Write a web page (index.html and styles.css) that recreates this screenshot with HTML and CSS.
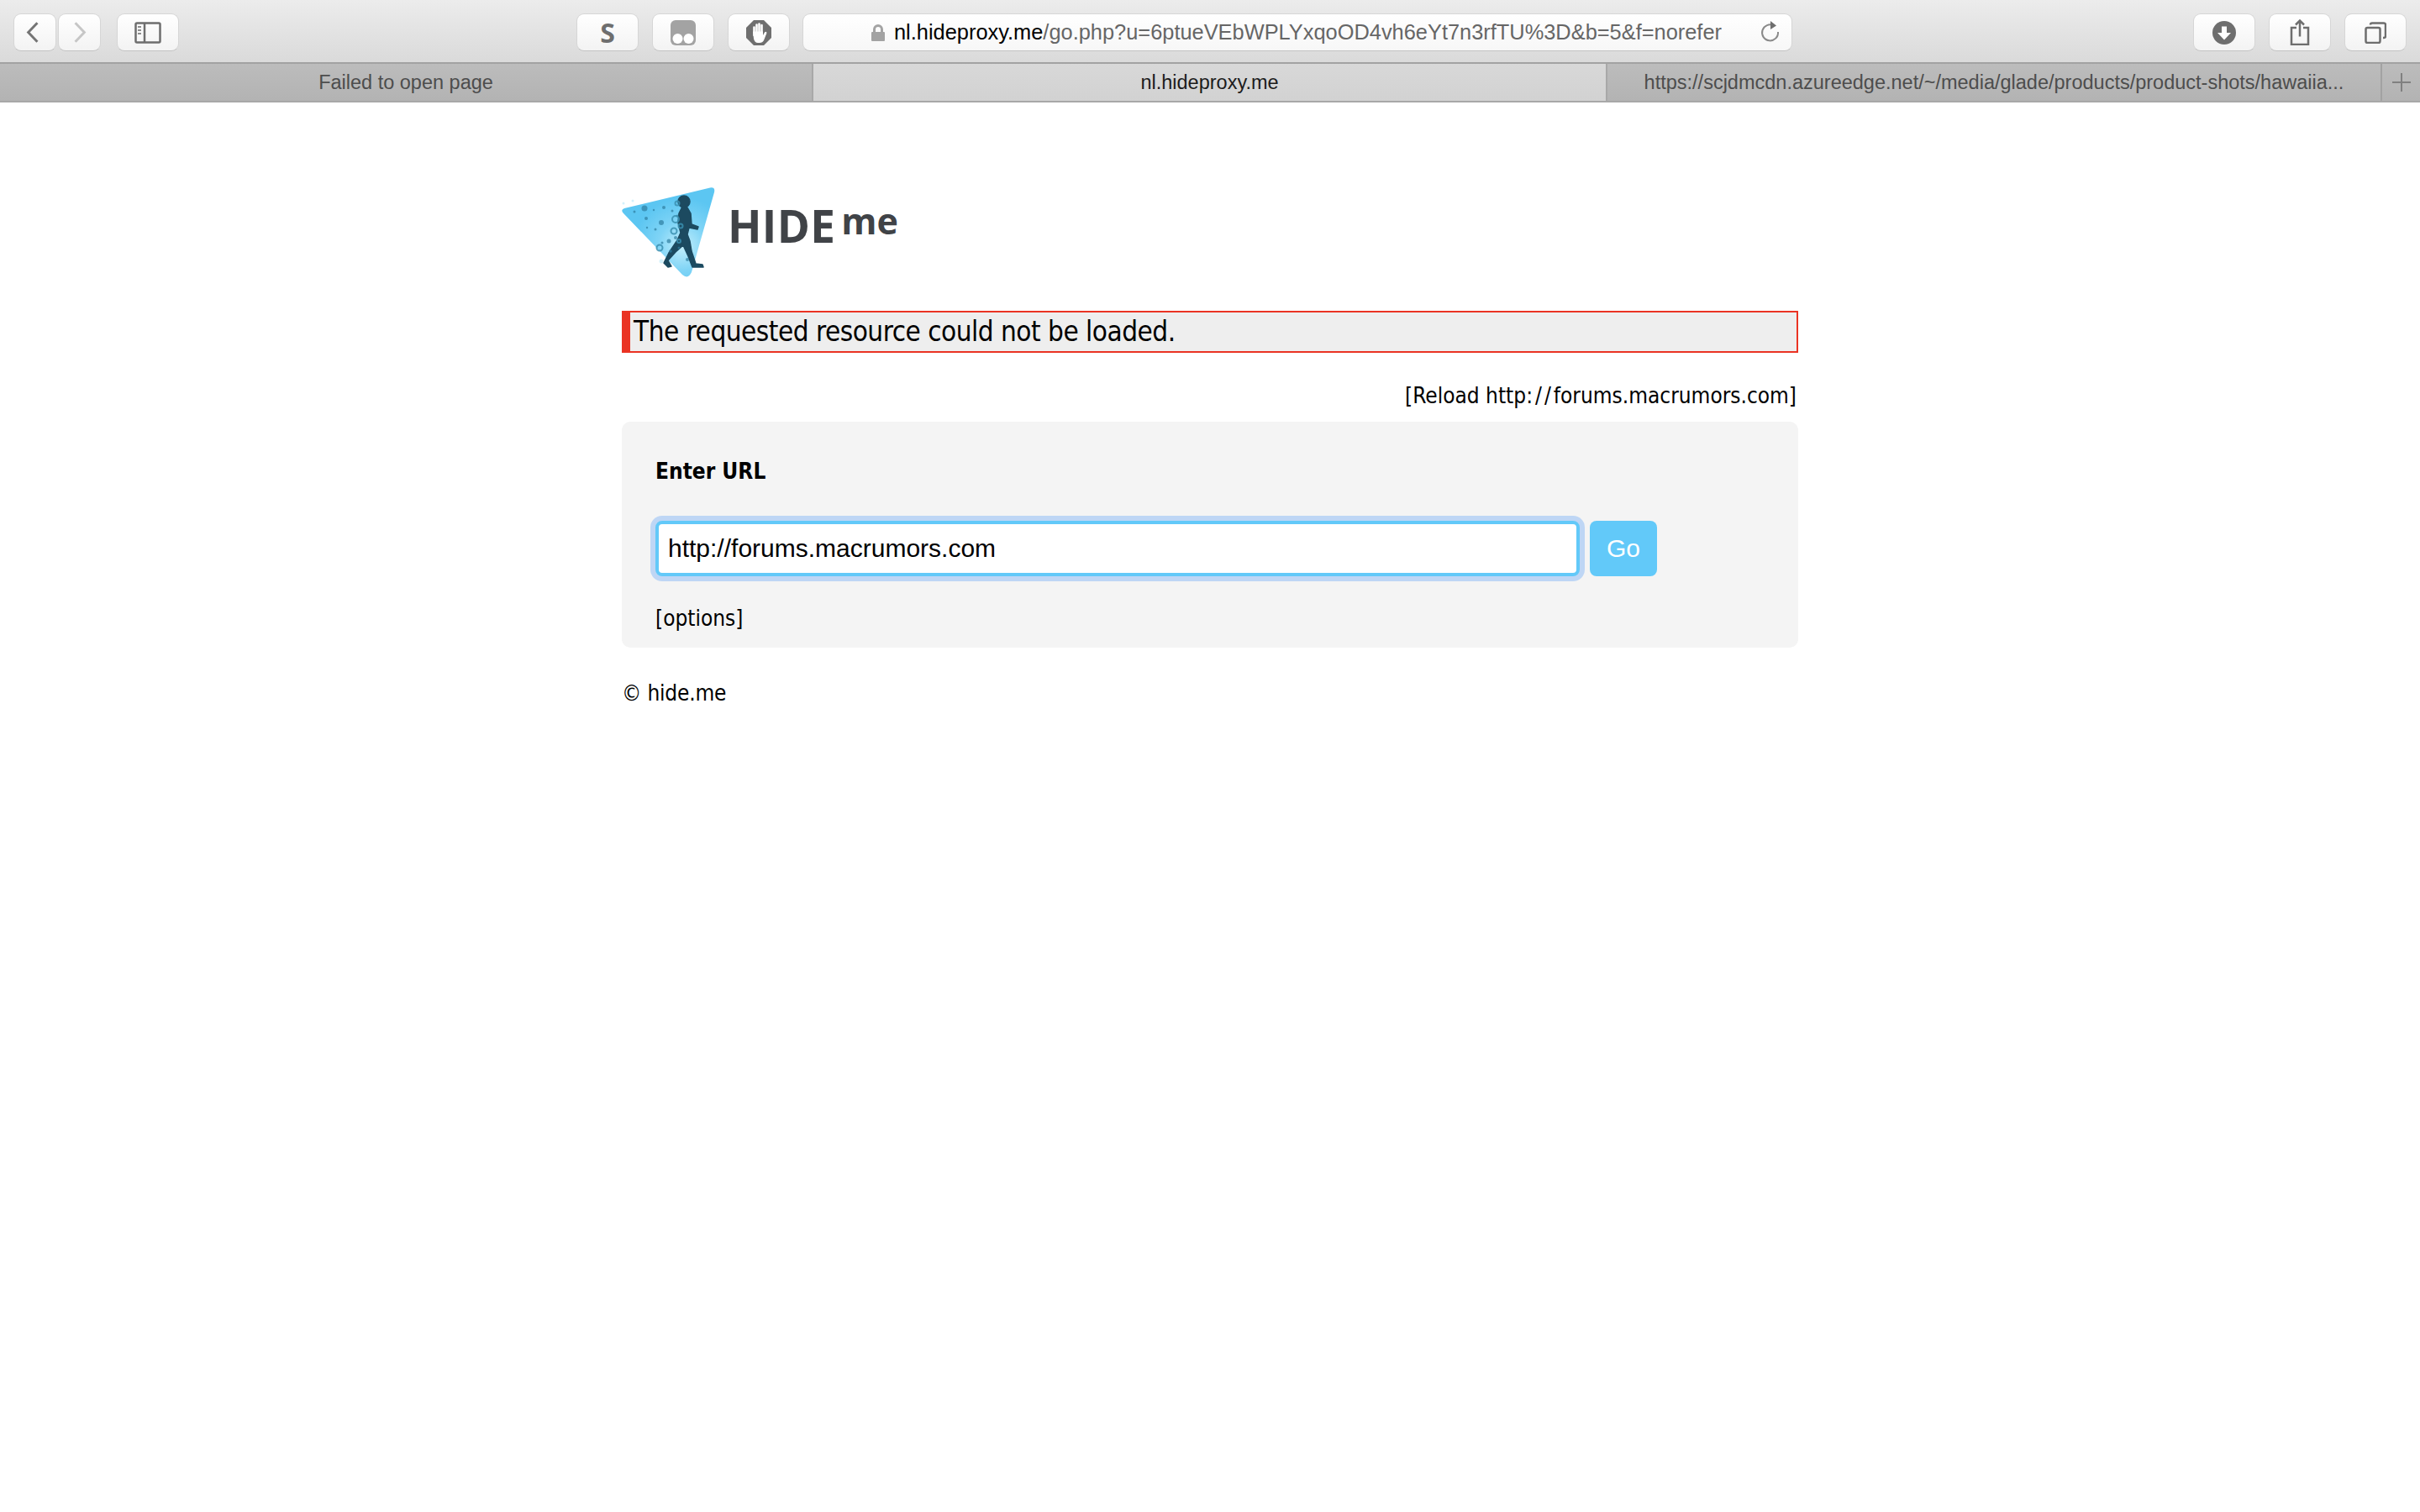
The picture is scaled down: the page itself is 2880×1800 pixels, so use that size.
FILE: index.html
```html
<!DOCTYPE html>
<html lang="en">
<head>
<meta charset="utf-8">
<title>nl.hideproxy.me</title>
<link rel="stylesheet" href="styles.css">
</head>
<body>
<header class="browser">
  <div class="toolbar">
    <div class="group group-left">
      <div class="btn btn-nav"><svg width="50" height="43" viewBox="0 0 50 43"><path d="M28 10 L17 21.500 L28 33" class="ic-line"/></svg></div>
      <div class="btn btn-nav btn-fwd"><svg width="50" height="43" viewBox="0 0 50 43"><path d="M20 10 L31 21.500 L20 33" class="ic-line ic-faint"/></svg></div>
      <div class="btn btn-wide btn-side"><svg width="32" height="26" viewBox="0 0 32 26"><rect x="1.500" y="1.500" width="29" height="23" rx="1.500" class="ic-thin"/><path d="M12 1.500 V24.500" class="ic-thin"/><path d="M4 6h4M4 10h4M4 14h4" class="ic-thin-dots"/></svg></div>
    </div>
    <div class="group group-ext">
      <div class="btn btn-wide btn-s">S</div>
      <div class="btn btn-wide"><svg width="30" height="30" viewBox="0 0 30 30"><rect width="30" height="30" rx="6" class="ic-ghost"/><circle cx="8.500" cy="22" r="6" class="ic-white"/><circle cx="21.500" cy="22" r="6" class="ic-white"/></svg></div>
      <div class="btn btn-wide"><svg width="30" height="30" viewBox="0 0 30 30"><path d="M9 0h12l9 9v12l-9 9H9l-9-9V9z" class="ic-dark"/><path d="M9.500 8.500v9.500M12.500 5.500v11M15.500 4.500v12M18.500 6v11" class="ic-hand"/><path d="M8 13.500 H20 V18 L22 14.500 C23 13 25 14 24.200 16 L21 24 Q19.500 27 16 27 H14 Q10 27 9 22z" class="ic-white"/></svg></div>
    </div>
    <div class="urlbar">
      <svg class="lock" width="16" height="20" viewBox="0 0 16 20"><path d="M3.500 9V6a4.500 4.500 0 0 1 9 0v3" class="ic-lock"/><rect x="0" y="9" width="16" height="11" rx="1" class="ic-fill-lock"/></svg>
      <span class="url"><span class="url-host">nl.hideproxy.me</span>/go.php?u=6ptueVEbWPLYxqoOD4vh6eYt7n3rfTU%3D&amp;b=5&amp;f=norefer</span>
      <svg class="reload" width="24" height="28" viewBox="0 0 24 28"><path d="M16 6.500 A9.500 9.500 0 1 0 21 14" class="ic-thin-soft"/><path d="M12 1 L19 6.500 L12 11z" class="ic-solid"/></svg>
    </div>
    <div class="group group-right">
      <div class="btn btn-wide"><svg width="28" height="28" viewBox="0 0 28 28"><circle cx="14" cy="14" r="14" class="ic-solid"/><path d="M11 6.500h6v7.500h5L14 22.500 6 14h5z" class="ic-white"/></svg></div>
      <div class="btn btn-wide"><svg width="24" height="31" viewBox="0 0 24 31"><path d="M8 10H2v20h20V10h-6" class="ic-thin"/><path d="M12 1.500v19M7 6.500l5-5 5 5" class="ic-thin"/></svg></div>
      <div class="btn btn-wide"><svg width="26" height="26" viewBox="0 0 26 26"><rect x="1.500" y="7" width="17" height="18" rx="2" class="ic-thin"/><path d="M7 3.500Q7 1.500 9 1.500h14Q25 1.500 25 3.500V17Q25 19 23 19h-1" class="ic-thin"/></svg></div>
    </div>
  </div>
  <div class="tabs">
    <div class="tab tab-first">Failed to open page</div>
    <div class="tab tab-active">nl.hideproxy.me</div>
    <div class="tab tab-last">https://scjdmcdn.azureedge.net/~/media/glade/products/product-shots/hawaiia...</div>
    <div class="tab-new"><svg width="22" height="22" viewBox="0 0 22 22"><path d="M11 0v22M0 11h22" class="ic-plus"/></svg></div>
  </div>
</header>
<main class="page">
  <div class="logo">
    <svg width="112" height="112" viewBox="0 0 112 112">
      <defs>
        <radialGradient id="tri" gradientUnits="userSpaceOnUse" cx="72" cy="72" r="58">
          <stop offset="0" stop-color="#c4effc"/>
          <stop offset="0.5" stop-color="#7fd4f6"/>
          <stop offset="1" stop-color="#5cc6f2"/>
        </radialGradient>
      </defs>
      <path d="M3 27 L105 2.500 Q111.500 1.500 110 8 L83 103 Q79 112 72 106 L2 33 Q-2 29 3 27z" fill="url(#tri)"/>
      <g class="walker">
        <circle cx="74" cy="19" r="7"/>
        <path d="M72 25 L78 26 L82 33 L83 46 L91 49 L90 52 L80 50 L78 58 L81 66 L83 78 L88 93 L96 94 L97 97 L84 97 L79 84 L73 71 L64 79 L55 89 L59 96 L55 97 L50 92 L56 80 L66 65 L70 56 L67 44 L68 33z"/>
      </g>
      <g class="specks">
        <circle cx="27" cy="27" r="3.500"/><circle cx="15" cy="31" r="1.500"/><circle cx="29" cy="39" r="2"/><circle cx="38" cy="29" r="1.200"/>
        <circle cx="50" cy="26" r="2"/><circle cx="47" cy="44" r="3"/><circle cx="40" cy="52" r="1.500"/><circle cx="30" cy="50" r="1.200"/>
        <circle cx="56" cy="66" r="2.500"/><circle cx="48" cy="68" r="1.500"/><circle cx="60" cy="30" r="1.500"/><circle cx="64" cy="62" r="2"/>
        <circle cx="68" cy="74" r="1.500"/><circle cx="58" cy="78" r="1.800"/><circle cx="66" cy="36" r="1.500"/><circle cx="78" cy="88" r="2"/>
      </g>
      <g class="rings">
        <circle cx="45" cy="74" r="3.500"/><circle cx="64" cy="40" r="4"/><circle cx="66" cy="21" r="2.500"/><circle cx="62" cy="54" r="3.500"/><circle cx="70" cy="48" r="2.500"/><circle cx="68" cy="66" r="2"/>
      </g>
      <g class="mist">
        <circle cx="47" cy="90" r="2.500"/><circle cx="2" cy="21" r="1.500"/><circle cx="13" cy="18" r="1.500"/>
      </g>
    </svg>
    <span class="logo-hide">HIDE</span><span class="logo-me">me</span>
  </div>
  <div class="alert">The requested resource could not be loaded.</div>
  <div class="reload-link">[Reload http<span class="slashes">://</span>forums.macrumors.com]</div>
  <form class="panel">
    <div class="panel-title">Enter URL</div>
    <div class="panel-row">
      <input class="url-input" type="text" value="http://forums.macrumors.com">
      <button class="go" type="button">Go</button>
    </div>
    <div class="options">[options]</div>
  </form>
  <footer class="copy">© hide.me</footer>
</main>
</body>
</html>
```
FILE: styles.css
```css
* { box-sizing: border-box; }
html, body { margin: 0; padding: 0; background: #fff; }
body { min-height: 1800px; font-family: "DejaVu Sans", sans-serif; font-stretch: condensed; color: #000; }

.browser { font-family: "Liberation Sans", Arial, sans-serif; font-stretch: normal; }
.toolbar { height: 74px; display: flex; align-items: flex-start; padding: 16px 16px 0; background: linear-gradient(#ececec, #dadada); }
.group { display: flex; gap: 16px; }
.group-left { width: 670px; }
.group-ext { margin-right: 15px; }
.group-right { margin-left: auto; }
.btn { height: 45px; background: linear-gradient(#ffffff, #f3f3f3); border: 1px solid #d6d6d6; border-bottom-color: #c2c2c2; border-radius: 9px; display: flex; align-items: center; justify-content: center; }
.btn-nav { width: 51px; }
.btn-fwd { margin-left: -14px; }
.btn-side { margin-left: 3px; }
.btn-wide { width: 74px; }
.btn-s { font-family: "Open Sans", sans-serif; font-size: 32px; font-weight: 700; color: #6e6e6e; }
.ic-line { fill: none; stroke: #747474; stroke-width: 3; }
.ic-faint { stroke: #c6c6c6; }
.ic-thin { fill: none; stroke: #6e6e6e; stroke-width: 2.500; }
.ic-thin-dots { fill: none; stroke: #8c8c8c; stroke-width: 2; }
.ic-thin-soft { fill: none; stroke: #8a8a8a; stroke-width: 2; }
.ic-ghost { fill: #a3a3a3; }
.ic-dark { fill: #6f6f6f; }
.ic-white { fill: #fff; }
.ic-hand { fill: none; stroke: #fff; stroke-width: 2.600; stroke-linecap: round; }
.ic-solid { fill: #6e6e6e; }
.ic-lock { fill: none; stroke: #a3a3a3; stroke-width: 3; }
.ic-fill-lock { fill: #a3a3a3; }
.ic-plus { stroke: #808080; stroke-width: 2; }

.urlbar { width: 1178px; height: 45px; background: linear-gradient(#ffffff, #f7f7f7); border: 1px solid #d6d6d6; border-bottom-color: #c2c2c2; border-radius: 9px; display: flex; align-items: center; padding-left: 81px; position: relative; }
.lock { margin-right: 11px; }
.url { font-size: 25.400px; color: #666; white-space: nowrap; }
.url-host { color: #000; }
.reload { position: absolute; right: 13px; top: 7px; }

.tabs { height: 48px; display: flex; border-top: 2px solid #a2a2a2; border-bottom: 2px solid #a8a8a8; font-size: 23.500px; background: linear-gradient(#bcbcbc, #b3b3b3); color: #4d4d4d; }
.tab { display: flex; align-items: center; justify-content: center; white-space: nowrap; }
.tab-first { width: 966px; }
.tab-active { width: 947px; background: linear-gradient(#d8d8d8, #d2d2d2); color: #1c1c1c; border-left: 2px solid #a8a8a8; border-right: 2px solid #a8a8a8; }
.tab-last { width: 920px; }
.tab-new { flex: 1; border-left: 2px solid #a2a2a2; display: flex; align-items: center; justify-content: center; }

.page { width: 1400px; margin: 0 auto; padding-top: 99px; }
.logo { display: flex; height: 112px; position: relative; align-items: flex-start; }
.logo-hide { font-family: "Open Sans", sans-serif; font-stretch: normal; font-weight: 700; font-size: 53px; line-height: 54px; letter-spacing: 0.300px; color: #404347; margin: 21px 0 0 14px; }
.logo-me { font-family: "Open Sans", sans-serif; font-stretch: normal; font-weight: 700; font-size: 43px; line-height: 44px; color: #404347; margin: 20px 0 0 7px; }
.walker { fill: #1c4a60; stroke: #1c4a60; stroke-width: 1.500; stroke-linejoin: round; }
.specks circle { fill: #2d7ea0; opacity: 0.7; }
.rings circle { fill: none; stroke: #3a8fb0; stroke-width: 2; opacity: 0.85; }
.mist circle { fill: #d4f1fb; }

.alert { margin-top: 37px; height: 50px; background: #eeeeee; border: 2px solid #ea3323; border-left-width: 10px; padding-left: 4px; font-size: 33px; letter-spacing: -0.5px; line-height: 46px; }
.reload-link { margin-top: 35px; text-align: right; font-size: 26px; line-height: 32px; padding-right: 2px; }
.slashes { letter-spacing: 3px; }
.panel { margin-top: 15px; height: 269px; background: #f4f4f4; border-radius: 10px; padding: 42px 40px 0; }
.panel-title { font-size: 26px; font-weight: 700; line-height: 34px; }
.panel-row { display: flex; gap: 12px; margin-top: 42px; }
.url-input { width: 1100px; height: 66px; border: 4px solid #62c9f9; border-radius: 8px; box-shadow: 0 0 0 6px #bed6f5; outline: none; background: #fff; padding: 0 11px; font: 30px "Liberation Sans", Arial, sans-serif; color: #000; }
.go { width: 80px; height: 66px; border: 0; border-radius: 8px; background: #62c9f9; color: #fff; font: 30px "Liberation Sans", Arial, sans-serif; padding: 0; }
.options { margin-top: 34px; font-size: 26px; line-height: 32px; }
.copy { margin-top: 38px; font-size: 26px; line-height: 32px; letter-spacing: -0.200px; }
```
